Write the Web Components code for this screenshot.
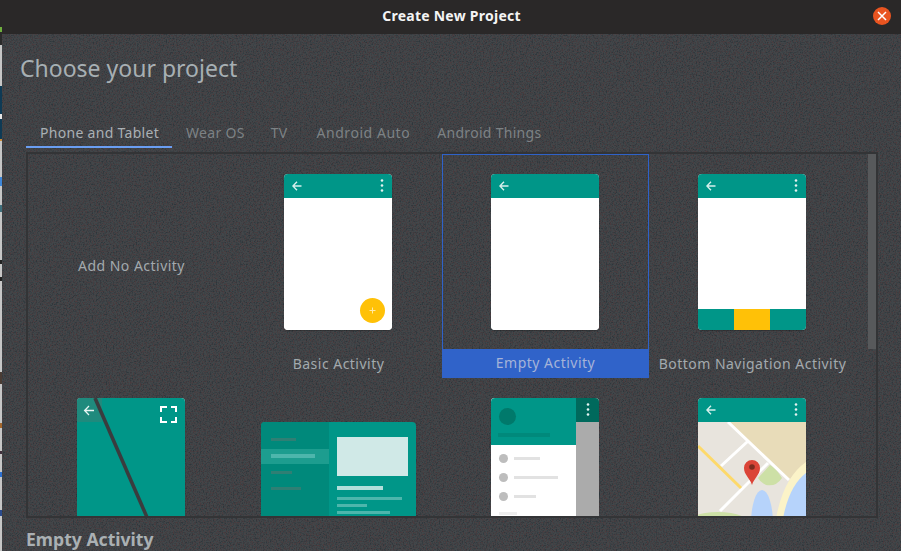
<!DOCTYPE html>
<html>
<head>
<meta charset="utf-8">
<title>Create New Project</title>
<style>
    html, body { margin: 0; height: 100%; background: #3e4244; overflow: hidden; }
    body { display: flex; font-family: "Noto Sans", sans-serif; }
</style>
</head>
<body>
<project-dialog heading="Create New Project">
    <h-title>Choose your project</h-title>
    <tab-bar>
        <tab-item active style="padding:6px 13px 0 14px">Phone and Tablet</tab-item>
        <tab-item style="padding:6px 13px 0 14px">Wear OS</tab-item>
        <tab-item style="padding:6px 15px 0 13px">TV</tab-item>
        <tab-item style="padding:6px 13px 0 14px;letter-spacing:.55px">Android Auto</tab-item>
        <tab-item style="padding:6px 13px 0 14px">Android Things</tab-item>
    </tab-bar>
    <template-panel>
        <template-cell plain>Add No Activity</template-cell>
        <template-cell label="Basic Activity"><phone-thumb kind="basic"></phone-thumb></template-cell>
        <template-cell label="Empty Activity" selected><phone-thumb kind="empty"></phone-thumb></template-cell>
        <template-cell label="Bottom Navigation Activity"><phone-thumb kind="bottom"></phone-thumb></template-cell>
        <template-cell><phone-thumb kind="fullscreen"></phone-thumb></template-cell>
        <template-cell><tablet-thumb></tablet-thumb></template-cell>
        <template-cell><phone-thumb kind="drawer"></phone-thumb></template-cell>
        <template-cell><phone-thumb kind="map"></phone-thumb></template-cell>
    </template-panel>
    <selected-name>Empty Activity</selected-name>
</project-dialog>

<script>
const noiseLayer = (r, g, b, seed, gain, cut) => `url("data:image/svg+xml,${encodeURIComponent(
    `<svg xmlns='http://www.w3.org/2000/svg' width='901' height='551'><filter id='n' x='0' y='0' width='100%' height='100%' color-interpolation-filters='sRGB'><feTurbulence type='fractalNoise' baseFrequency='.7' numOctaves='2' seed='${seed}'/><feColorMatrix values='0 0 0 0 ${r} 0 0 0 0 ${g} 0 0 0 0 ${b} ${gain} 0 0 0 ${cut}'/></filter><rect width='901' height='551' filter='url(#n)'/></svg>`
)}")`
const NOISE = [noiseLayer(.3, .23, .24, 3, 3, -1.4), noiseLayer(.18, .21, .23, 9, 3, -1.3)].join(',')

const backArrow = `<svg width="10" height="10" viewBox="0 0 10 10" fill="none" stroke="#d5efec" stroke-width="1.4"><path d="M9.500 5H1M5 .8 .9 5 5 9.200"/></svg>`
const dots = `<svg width="4" height="13" viewBox="0 0 4 13" fill="#e3f3f1"><circle cx="2" cy="1.500" r="1.300"/><circle cx="2" cy="6.500" r="1.300"/><circle cx="2" cy="11.500" r="1.300"/></svg>`

class ProjectDialog extends HTMLElement {
    constructor () {
        super()
        this.attachShadow({ mode: 'open' }).innerHTML = `
        <style>
            :host { display: flex; flex: 1; min-width: 0; }
            .strip {
                width: 2px; flex: none;
                background: linear-gradient(#2a2828 0 27px, #6fae3e 27px 32px, #2a2a2a 32px 45px, #c6c6c6 45px 86px,
                    #0e3a55 86px 114px, #e6e6e6 114px 119px, #0e3a55 119px 139px, #c98a3a 139px 141px, #c6c6c6 141px 177px,
                    #3d86d8 177px 186px, #c6c6c6 186px 205px, #3f6f7c 205px 212px, #c6c6c6 212px 260px, #222 260px 264px,
                    #c6c6c6 264px 277px, #222 277px 281px, #c6c6c6 281px 372px, #4a3c34 372px 384px, #c6c6c6 384px 423px,
                    #a4672c 423px 428px, #c6c6c6 428px 451px, #40303c 451px 454px, #c6c6c6 454px 472px, #2c6fd0 472px 477px,
                    #c6c6c6 477px 510px, #2a4a8c 510px 516px, #c6c6c6 516px);
            }
            .window { flex: 1; min-width: 0; display: flex; flex-direction: column; }
            .bar {
                height: 34px; flex: none; display: flex; align-items: center; justify-content: center;
                position: relative; background: #2a2828; color: #f4f4f4;
                font-weight: 700; font-size: 14px; letter-spacing: .25px; padding-bottom: 3px; box-sizing: border-box;
            }
            .close { position: absolute; right: 10px; top: 7px; width: 18px; height: 18px; border-radius: 50%; background: #e95420; display: flex; align-items: center; justify-content: center; }
            .body { flex: 1; min-height: 0; display: flex; flex-direction: column; background-color: #42474a; background-image: ${NOISE}; }
        </style>
        <div class="strip"></div>
        <div class="window">
            <div class="bar"><span class="heading"></span>
                <span class="close"><svg width="10" height="10" viewBox="0 0 10 10" stroke="#fff" stroke-width="1.500"><path d="M1 1l8 8M9 1l-8 8"/></svg></span>
            </div>
            <div class="body"><slot></slot></div>
        </div>`
        this.shadowRoot.querySelector('.heading').textContent = this.getAttribute('heading')
    }
}
customElements.define('project-dialog', ProjectDialog)

class HTitle extends HTMLElement {
    constructor () {
        super()
        this.attachShadow({ mode: 'open' }).innerHTML = `
        <style>:host { display: block; height: 70px; padding: 16px 0 0 18px; box-sizing: border-box; font-size: 23px; line-height: 36px; color: #a7afb3; }</style><slot></slot>`
    }
}
customElements.define('h-title', HTitle)

class TabBar extends HTMLElement {
    constructor () {
        super()
        this.attachShadow({ mode: 'open' }).innerHTML = `
        <style>:host { display: flex; margin-left: 24px; padding-top: 12px; box-sizing: border-box; height: 48px; flex: none; }</style><slot></slot>`
    }
}
customElements.define('tab-bar', TabBar)

class TabItem extends HTMLElement {
    constructor () {
        super()
        this.attachShadow({ mode: 'open' }).innerHTML = `
        <style>
            :host { display: block; height: 34px; box-sizing: border-box; font-size: 14px; line-height: 26px; color: #7d8285; letter-spacing: .3px; border-bottom: 2px solid transparent; white-space: nowrap; }
            :host([active]) { color: #aab0b4; border-bottom-color: #6a9ef2; }
        </style><slot></slot>`
    }
}
customElements.define('tab-item', TabItem)

class TemplatePanel extends HTMLElement {
    constructor () {
        super()
        this.attachShadow({ mode: 'open' }).innerHTML = `
        <style>
            :host { display: flex; height: 366px; flex: none; box-sizing: border-box; margin: 2px 23px 0 24px; border: 2px solid #333436; overflow: hidden; }
            .grid { flex: 1; min-width: 0; display: grid; grid-template-columns: repeat(4, 207px); grid-auto-rows: 224px; align-content: start; overflow: hidden; }
            .track { width: 8px; flex: none; }
            .thumb { height: 195px; background: #57595b; }
        </style>
        <div class="grid"><slot></slot></div>
        <div class="track"><div class="thumb"></div></div>`
    }
}
customElements.define('template-panel', TemplatePanel)

class TemplateCell extends HTMLElement {
    constructor () {
        super()
        const label = this.getAttribute('label')
        this.attachShadow({ mode: 'open' }).innerHTML = `
        <style>
            :host { display: flex; flex-direction: column; box-sizing: border-box; height: 224px; }
            .art { height: 195px; flex: none; display: flex; align-items: center; justify-content: center; box-sizing: border-box; padding-right: 1px; }
            .label { height: 29px; flex: none; display: flex; align-items: center; justify-content: center; font-size: 14px; color: #a3aaae; letter-spacing: .48px; white-space: nowrap; box-sizing: border-box; }
            :host([plain]) .art { height: 224px; font-size: 14px; color: #a3aaae; letter-spacing: .48px; padding: 0 0 2px; }
            :host([plain]) .label { display: none; }
            :host([selected]) .art { border: 1px solid #2f62c9; border-bottom: 0; }
            :host([selected]) .label { background: #3063c9; color: #a5b3d8; padding: 0 0 2px; }
        </style>
        <div class="art"><slot></slot></div>
        <div class="label"></div>`
        this.shadowRoot.querySelector('.label').textContent = label
    }
}
customElements.define('template-cell', TemplateCell)

const appBar = (withDots) => `<div class="appbar">${backArrow}${withDots ? dots : ''}</div>`
const PHONES = {
    basic: `${appBar(true)}<div class="white"></div>
        <div class="fab"><svg width="7" height="7" viewBox="0 0 7 7" stroke="#ffe9a8" stroke-width="1"><path d="M3.500 .5v6M.5 3.500h6"/></svg></div>`,
    empty: `${appBar(false)}<div class="white"></div>`,
    bottom: `${appBar(true)}<div class="white"></div><div class="nav"><i></i><b></b><i></i></div>`,
    fullscreen: `<svg class="art" width="108" height="156" viewBox="0 0 108 156">
            <rect width="108" height="156" fill="#009688"/>
            <rect width="25" height="24" fill="#1f8a7d"/>
            <path d="M18 0 86 156" stroke="#3a3c3e" stroke-width="3.600"/>
            <path d="M17 12.500H8M12 8 7.600 12.500 12 17" fill="none" stroke="#e6f4f2" stroke-width="1.300"/>
            <path d="M84 14V9h6M94 9h5v5M99 19v5h-5M90 24h-6v-5" fill="none" stroke="#fff" stroke-width="2"/>
        </svg>`,
    drawer: `<div class="drawer">
            <div class="pane">
                <div class="head"><span class="avatar"></span><span class="headline"></span></div>
                <div class="row"><span class="dot"></span><span class="ln" style="width:26px"></span></div>
                <div class="row"><span class="dot"></span><span class="ln" style="width:44px"></span></div>
                <div class="row"><span class="dot"></span><span class="ln" style="width:22px"></span></div>
                <div class="foot"></div>
            </div>
            <div class="scrim"><div class="corner">${dots}</div></div>
        </div>`,
    map: `${appBar(true)}<svg class="map" width="108" height="132" viewBox="0 0 108 132">
            <rect width="108" height="132" fill="#e8e4dd"/>
            <path d="M31 0H108V41L91 58Z" fill="#e8dcb9"/>
            <path d="M72 43Q78 46 84 56Q78 65 68 63Q62 60 60 56Z" fill="#cde0a6"/>
            <ellipse cx="20" cy="104" rx="34" ry="14" fill="#cde0a6"/>
            <path d="M108 40Q82 58 76 110H84Q88 70 108 55Z" fill="#fbf3c8"/>
            <path d="M108 51Q88 66 83 110H108Z" fill="#b6d3fb"/>
            <ellipse cx="64" cy="102" rx="11" ry="34" fill="#b6d3fb"/>
            <path d="M30 0 91 58M49 20 23 44M70 41 22 89" stroke="#fff" stroke-width="3" fill="none"/>
            <path d="M0 24 43 66" stroke="#fdd96a" stroke-width="3"/>
            <path d="M54 63C52 56 46 53 46 46A8 8 0 0 1 62 46C62 53 56 56 54 63Z" fill="#db4437"/>
            <circle cx="54" cy="45" r="2.800" fill="#7b2b1f"/>
        </svg>`
}

class PhoneThumb extends HTMLElement {
    constructor () {
        super()
        this.attachShadow({ mode: 'open' }).innerHTML = `
        <style>
            :host { display: flex; flex-direction: column; position: relative; width: 108px; height: 156px; flex: none; border-radius: 4px; overflow: hidden; background: #fff; box-shadow: 0 1px 1px rgba(0,0,0,.25); }
            .appbar { height: 24px; flex: none; background: #009688; display: flex; align-items: center; justify-content: space-between; padding: 0 8px 0 7.5px; box-sizing: border-box; }
            .white { flex: 1; background: #fff; }
            .fab { position: absolute; right: 7px; bottom: 7px; width: 25px; height: 25px; border-radius: 50%; background: #ffc107; display: flex; align-items: center; justify-content: center; }
            .nav { height: 21px; flex: none; display: flex; }
            .nav i, .nav b { flex: 1; background: #009688; }
            .nav b { background: #ffc107; }
            .art, .map { display: block; flex: none; }
            .drawer { display: flex; flex: 1; }
            .pane { width: 85px; flex: none; background: #fff; display: flex; flex-direction: column; }
            .head { height: 47px; flex: none; background: #009688; display: flex; flex-direction: column; padding: 10px 0 0 8px; box-sizing: border-box; }
            .avatar { width: 17px; height: 17px; border-radius: 50%; background: #00796b; }
            .headline { width: 52px; height: 4px; margin-top: 8px; margin-left: -1px; background: #00897b; }
            .row { height: 19px; flex: none; display: flex; align-items: center; gap: 6px; padding-left: 8px; position: relative; top: 4px; }
            .dot { width: 9px; height: 9px; border-radius: 50%; background: #bdbdbd; }
            .ln { height: 3px; background: #e2e2e2; }
            .foot { width: 18px; height: 3px; margin: 10px 0 0 8px; background: #eee; }
            .scrim { flex: 1; background: #ababab; }
            .corner { height: 24px; background: #00695c; display: flex; align-items: center; justify-content: center; }
        </style>${PHONES[this.getAttribute('kind')]}`
    }
}
customElements.define('phone-thumb', PhoneThumb)

class TabletThumb extends HTMLElement {
    constructor () {
        super()
        this.attachShadow({ mode: 'open' }).innerHTML = `
        <style>
            :host { display: flex; width: 155px; height: 108px; margin-left: 1px; flex: none; border-radius: 4px; overflow: hidden; background: #009688; }
            .side { width: 68px; flex: none; background: #00897b; padding-top: 10px; box-sizing: border-box; }
            .side div { height: 16px; display: flex; align-items: center; padding-left: 10px; }
            .side span { height: 3px; background: #2f7f74; }
            .side .on { height: 15px; background: #1d9d8f; margin-top: 1px; }
            .side .on span { height: 4px; background: #4db6ac; }
            .main { flex: 1; padding: 15px 8px 0; display: flex; flex-direction: column; }
            .img { width: 71px; height: 39px; background: #d0e9e7; flex: none; }
            .title { width: 46px; height: 4px; margin-top: 10px; background: #b2dfdb; flex: none; }
            .line { height: 3px; margin-top: 4px; background: #4db6ac; flex: none; }
        </style>
        <div class="side">
            <div><span style="width:25px"></span></div>
            <div class="on"><span style="width:44px"></span></div>
            <div style="margin-top:1px"><span style="width:21px"></span></div>
            <div><span style="width:30px"></span></div>
        </div>
        <div class="main">
            <div class="img"></div><div class="title"></div>
            <div class="line" style="width:65px;margin-top:7px"></div>
            <div class="line" style="width:30px"></div>
            <div class="line" style="width:53px"></div>
        </div>`
    }
}
customElements.define('tablet-thumb', TabletThumb)

class SelectedName extends HTMLElement {
    constructor () {
        super()
        this.attachShadow({ mode: 'open' }).innerHTML = `
        <style>:host { display: block; padding: 9px 0 0 24px; font-size: 17.600px; line-height: 24px; font-weight: 700; color: #aab0b3; }</style><slot></slot>`
    }
}
customElements.define('selected-name', SelectedName)
</script>
</body>
</html>
